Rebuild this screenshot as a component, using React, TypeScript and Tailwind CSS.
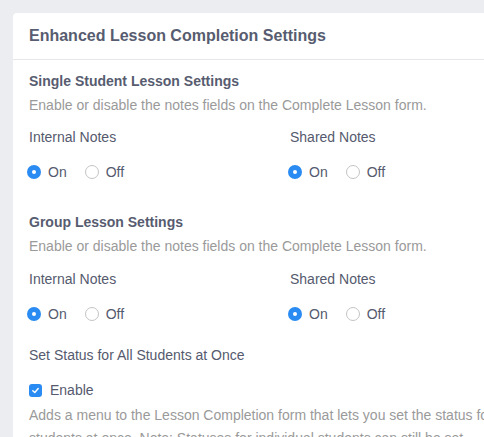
import React from "react";

const Radio = ({ checked, label }: { checked: boolean; label: string }) => (
  <div className="flex items-center">
    {checked ? (
      <span className="w-[14px] h-[14px] rounded-full bg-[#2a8bf2] flex items-center justify-center">
        <span className="w-[4px] h-[4px] rounded-full bg-white" />
      </span>
    ) : (
      <span className="w-[14px] h-[14px] rounded-full border border-[#c4c4c4] bg-white" />
    )}
    <span className="ml-[7px] text-[14px] leading-[20px] text-[#555a6e]">{label}</span>
  </div>
);

const RadioGroup = () => (
  <div className="flex items-center gap-[18px] h-[20px] ml-[-2px]">
    <Radio checked label="On" />
    <Radio checked={false} label="Off" />
  </div>
);

const NotesRow = () => (
  <div className="flex">
    <div className="w-[261px]">
      <div className="text-[14px] leading-[20px] text-[#555a6e]">Internal Notes</div>
      <div className="mt-[15px]">
        <RadioGroup />
      </div>
    </div>
    <div>
      <div className="text-[14px] leading-[20px] text-[#555a6e]">Shared Notes</div>
      <div className="mt-[15px]">
        <RadioGroup />
      </div>
    </div>
  </div>
);

export default function App() {
  return (
    <div
      className="w-[484px] h-[437px] overflow-hidden bg-[#ecedf1]"
      style={{ fontFamily: '"Liberation Sans", Arial, sans-serif' }}
    >
      <div className="ml-[13px] mt-[13px] w-[520px] h-[500px] bg-white rounded-tl-[4px]">
        <div className="h-[47px] px-4 flex items-center border-b border-[#e5e6ea]">
          <h1 className="text-[16px] font-bold text-[#575c70]">Enhanced Lesson Completion Settings</h1>
        </div>
        <div className="px-4 pt-[11px]">
          <h2 className="text-[14px] leading-[20px] font-bold text-[#575c70]">Single Student Lesson Settings</h2>
          <p className="mt-[4px] text-[14px] leading-[20px] text-[#9a9a9a]">
            Enable or disable the notes fields on the Complete Lesson form.
          </p>
          <div className="mt-[12px]">
            <NotesRow />
          </div>
          <h2 className="mt-[30px] text-[14px] leading-[20px] font-bold text-[#575c70]">Group Lesson Settings</h2>
          <p className="mt-[4px] text-[14px] leading-[20px] text-[#9a9a9a]">
            Enable or disable the notes fields on the Complete Lesson form.
          </p>
          <div className="mt-[13px]">
            <NotesRow />
          </div>
          <div className="mt-[21px] text-[14px] leading-[20px] text-[#555a6e]">Set Status for All Students at Once</div>
          <div className="mt-[15px] flex items-center h-[20px]">
            <span className="w-[13px] h-[13px] rounded-[3px] bg-[#2a8bf2] flex items-center justify-center">
              <svg width="9" height="9" viewBox="0 0 10 10">
                <path d="M2 5.2 L4.2 7.3 L8 2.8" fill="none" stroke="white" strokeWidth="1.6" strokeLinecap="round" strokeLinejoin="round" />
              </svg>
            </span>
            <span className="ml-[8px] text-[14px] leading-[20px] text-[#555a6e]">Enable</span>
          </div>
          <p className="mt-[4px] w-[490px] text-[14px] leading-[23px] text-[#9a9a9a]">
            Adds a menu to the Lesson Completion form that lets you set the status for all students at once. Note: Statuses for individual students can still be set.
          </p>
        </div>
      </div>
    </div>
  );
}
